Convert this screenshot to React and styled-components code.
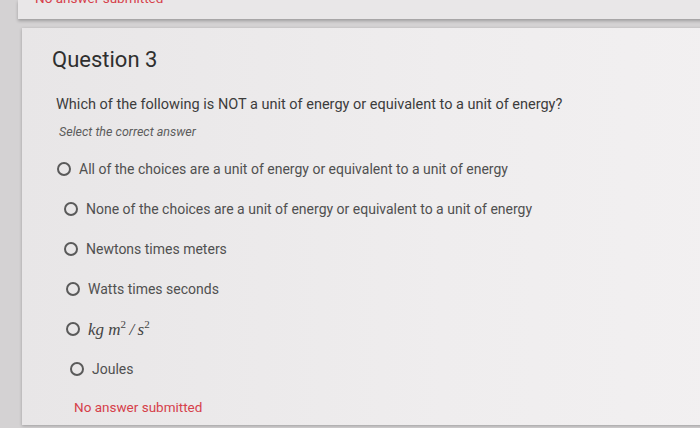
import React from 'react';
import styled, { createGlobalStyle } from 'styled-components';

const GlobalStyle = createGlobalStyle`
  html, body {
    margin: 0;
    padding: 0;
    background: #d4d2d3;
    font-family: Roboto, 'Liberation Sans', sans-serif;
    overflow: hidden;
  }
`;

const Page = styled.div`
  width: 700px;
  height: 428px;
  overflow: hidden;
`;

const PrevCard = styled.div`
  margin-left: 18px;
  width: 700px;
  height: 19px;
  overflow: hidden;
  background: #e9e7e8;
  box-shadow: 0 2px 3px rgba(0, 0, 0, 0.25);
`;

const Feedback = styled.div`
  color: #d6404a;
  font-size: 13.5px;
  line-height: 16px;
  padding-left: ${(p) => p.$indent || 0}px;
  margin-top: ${(p) => p.$offset || 0}px;
`;

const Card = styled.section`
  margin: 9px 0 0 22px;
  width: 700px;
  height: 397px;
  box-sizing: border-box;
  padding: 18px 0 0 30px;
  background: linear-gradient(90deg, #e8e6e7 0%, #efedee 60%, #f2f0f1 100%);
  box-shadow: 0 1px 3px rgba(0, 0, 0, 0.25);
`;

const Title = styled.h2`
  margin: 0;
  font-size: 22px;
  font-weight: 400;
  line-height: 28px;
  color: #2f2f2f;
`;

const Prompt = styled.p`
  margin: 22px 0 0 4px;
  font-size: 14.5px;
  line-height: 18px;
  color: #3c3c3c;
`;

const Hint = styled.p`
  margin: 10px 0 0 7px;
  font-size: 12.5px;
  line-height: 16px;
  font-style: italic;
  color: #5c5c5c;
`;

const Options = styled.div`
  display: flex;
  flex-direction: column;
  margin-top: 9px;
`;

const Option = styled.label`
  display: flex;
  align-items: center;
  gap: 8px;
  height: 40px;
  padding-left: ${(p) => p.$indent}px;
  font-size: 14px;
  color: #505050;
`;

const Radio = styled.span`
  width: 10px;
  height: 10px;
  border: 2px solid #5a5a5a;
  border-radius: 50%;
  flex-shrink: 0;
`;

const Math = styled.span`
  font-family: 'Liberation Serif', 'DejaVu Serif', serif;
  font-style: italic;
  font-size: 17px;
  color: #444;

  sup {
    font-size: 11px;
    font-style: normal;
  }
`;

const options = [
  { text: 'All of the choices are a unit of energy or equivalent to a unit of energy', indent: 5 },
  { text: 'None of the choices are a unit of energy or equivalent to a unit of energy', indent: 12 },
  { text: 'Newtons times meters', indent: 12 },
  { text: 'Watts times seconds', indent: 14 },
  { math: true, indent: 14 },
  { text: 'Joules', indent: 18 },
];

export default function App() {
  return (
    <Page>
      <GlobalStyle />
      <PrevCard>
        <Feedback $indent={17} $offset={-10}>No answer submitted</Feedback>
      </PrevCard>
      <Card>
        <Title>Question 3</Title>
        <Prompt>Which of the following is NOT a unit of energy or equivalent to a unit of energy?</Prompt>
        <Hint>Select the correct answer</Hint>
        <Options>
          {options.map((o, i) => (
            <Option key={i} $indent={o.indent}>
              <Radio />
              {o.math ? (
                <Math>
                  kg m<sup>2</sup>&thinsp;/&thinsp;s<sup>2</sup>
                </Math>
              ) : (
                o.text
              )}
            </Option>
          ))}
        </Options>
        <Feedback $indent={22} $offset={10}>No answer submitted</Feedback>
      </Card>
    </Page>
  );
}
